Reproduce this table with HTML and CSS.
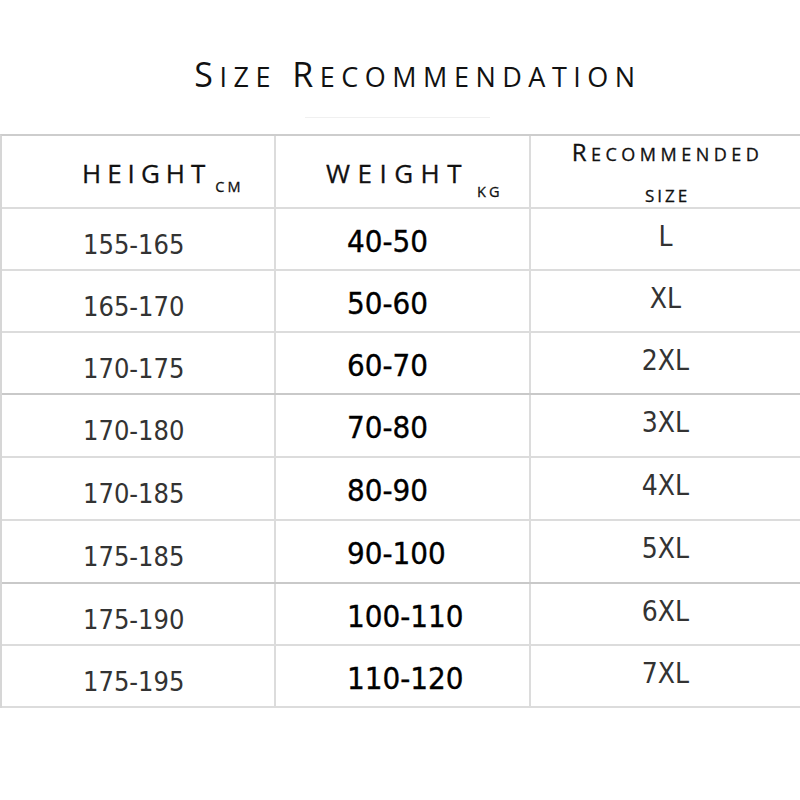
FILE: index.html
```html
<!DOCTYPE html>
<html lang="en">
<head>
<meta charset="utf-8">
<title>Size Recommendation</title>
<link rel="stylesheet" href="styles.css">
</head>
<body>
<div class="page">
  <h1 class="title">S<span class="sc">ize</span> R<span class="sc">ecommendation</span></h1>
  <div class="table">
    <div class="row head">
      <div class="cell c1"><span class="hd">HEIGHT</span><span class="unit cm">CM</span></div>
      <div class="cell c2"><span class="hd wt">WEIGHT</span><span class="unit kg">KG</span></div>
      <div class="cell c3"><div class="rec">R<span class="sc">ecommended</span></div><div class="rec-size">size</div></div>
    </div>
    <div class="row r62"><div class="cell c1">155-165</div><div class="cell c2">40-50</div><div class="cell c3">L</div></div>
    <div class="row r62"><div class="cell c1">165-170</div><div class="cell c2">50-60</div><div class="cell c3">XL</div></div>
    <div class="row r62 sep"><div class="cell c1">170-175</div><div class="cell c2">60-70</div><div class="cell c3">2XL</div></div>
    <div class="row r63"><div class="cell c1">170-180</div><div class="cell c2">70-80</div><div class="cell c3">3XL</div></div>
    <div class="row r63"><div class="cell c1">170-185</div><div class="cell c2">80-90</div><div class="cell c3">4XL</div></div>
    <div class="row r63 sep"><div class="cell c1">175-185</div><div class="cell c2">90-100</div><div class="cell c3">5XL</div></div>
    <div class="row r62"><div class="cell c1">175-190</div><div class="cell c2">100-110</div><div class="cell c3">6XL</div></div>
    <div class="row r62"><div class="cell c1">175-195</div><div class="cell c2">110-120</div><div class="cell c3">7XL</div></div>
  </div>
</div>
</body>
</html>
```

FILE: styles.css
```css
html, body {
  margin: 0;
  padding: 0;
  background: #ffffff;
}

.page {
  width: 800px;
}

.title {
  position: relative;
  margin: 0;
  height: 134px;
  box-sizing: border-box;
  padding: 57px 0 0 36px;
  font-family: "Open Sans", "DejaVu Sans", sans-serif;
  font-weight: 400;
  font-size: 34px;
  line-height: 34px;
  letter-spacing: 6.5px;
  text-align: center;
  color: #111111;
}

.title::after {
  content: "";
  position: absolute;
  left: 305px;
  top: 117px;
  width: 185px;
  height: 1px;
  background: #f0f0f0;
}

.title .sc {
  font-size: 27px;
  text-transform: uppercase;
}

.table {
  width: 800px;
  border-top: 2px solid #cdcdcd;
  border-left: 2px solid #d6d6d6;
  box-sizing: border-box;
}

.row {
  display: grid;
  grid-template-columns: 274px 255px 1fr;
  box-sizing: border-box;
  border-bottom: 2px solid #dcdcdc;
}

.row.head {
  height: 73px;
}

.row.r62 {
  height: 62px;
}

.row.r63 {
  height: 63px;
}

.row.sep {
  border-bottom-color: #c9c9c9;
}

.cell {
  display: flex;
  align-items: center;
  box-sizing: border-box;
  font-family: "DejaVu Sans Condensed", "DejaVu Sans", sans-serif;
  font-stretch: condensed;
  line-height: 1;
}

.c1, .c2 {
  border-right: 2px solid #dcdcdc;
}

.c1 {
  padding: 10px 0 0 81px;
  font-size: 27px;
  color: #333333;
}

.c2 {
  padding: 4px 0 0 71px;
  font-size: 31px;
  color: #000000;
  -webkit-text-stroke: 0.35px #000000;
}

.c3 {
  justify-content: center;
  padding: 0 0 5px 0;
  font-size: 28px;
  color: #333333;
}

.head .cell {
  font-family: "Open Sans", "DejaVu Sans", sans-serif;
  font-stretch: normal;
  color: #111111;
  -webkit-text-stroke: 0.3px #111111;
}

.head .c1,
.head .c2 {
  align-items: flex-start;
  padding-top: 24px;
}

.head .c1 {
  padding-left: 80px;
}

.head .c2 {
  padding-left: 50px;
}

.hd {
  font-size: 26px;
  line-height: 26px;
  letter-spacing: 6px;
}

.hd.wt {
  letter-spacing: 7.5px;
}

.unit {
  font-size: 14.5px;
  line-height: 14px;
  letter-spacing: 3px;
}

.unit.cm {
  margin: 20px 0 0 4px;
}

.unit.kg {
  margin: 25px 0 0 8px;
}

.head .c3 {
  flex-direction: column;
  justify-content: flex-start;
  align-items: center;
  padding: 4px 0 0 4px;
}

.rec {
  font-size: 24px;
  line-height: 24px;
  letter-spacing: 4.5px;
}

.rec .sc {
  font-size: 18px;
  text-transform: uppercase;
}

.rec-size {
  margin-top: 21px;
  font-size: 17px;
  line-height: 17px;
  letter-spacing: 3px;
  text-transform: uppercase;
}
```
